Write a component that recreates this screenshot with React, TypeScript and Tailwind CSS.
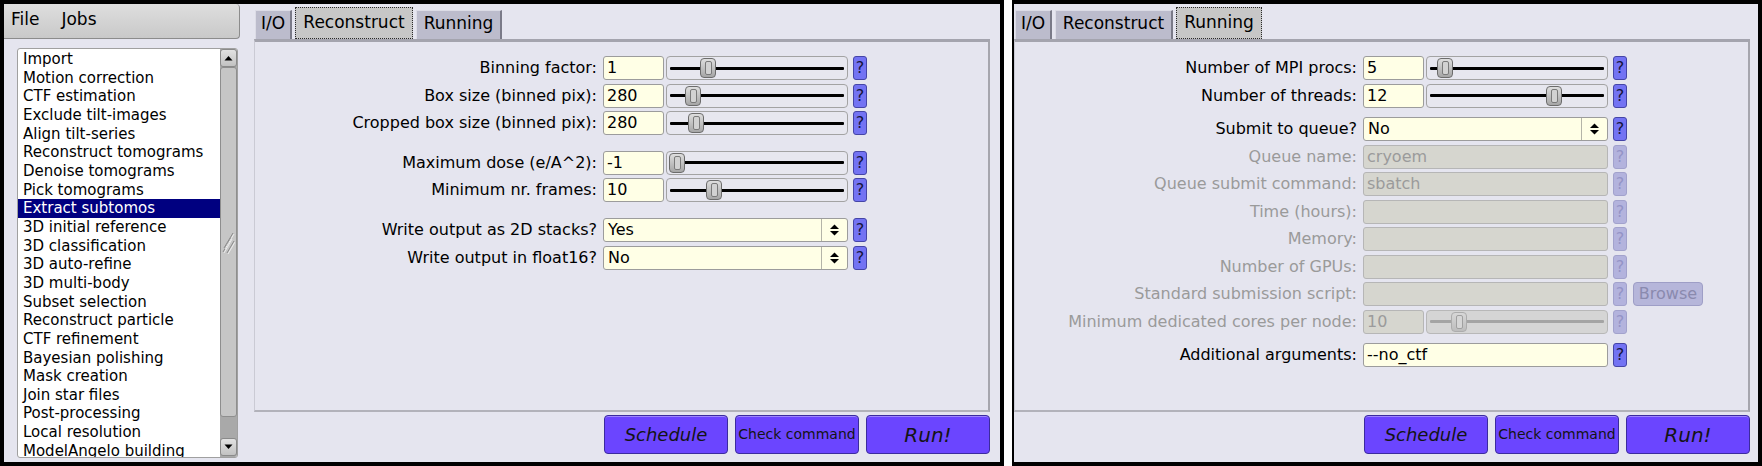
import React from "react";

const FONT = "font-['DejaVu_Sans',sans-serif]";

function Help({ disabled = false }: { disabled?: boolean }) {
  return (
    <div
      className={`w-[14px] h-[24px] shrink-0 rounded-[3px] border flex items-center justify-center text-[16px] leading-none ${
        disabled
          ? "bg-[#b3b3dd] border-[#a2a2cc] text-[#9393c6]"
          : "bg-[#7373f3] border-[#4545a6] text-[#14143a]"
      }`}
    >
      ?
    </div>
  );
}

function Input({
  value = "",
  w = "w-[61px]",
  disabled = false,
}: {
  value?: string;
  w?: string;
  disabled?: boolean;
}) {
  return (
    <div
      className={`${w} h-[24px] shrink-0 rounded-[3px] border flex items-center pl-[3px] text-[16px] ${
        disabled
          ? "bg-[#d6d6cf] border-[#b6b6b6] text-[#9b9b9b]"
          : "bg-[#ffffe6] border-[#9c9c9c] text-black"
      }`}
    >
      {value}
    </div>
  );
}

function Slider({ pos, disabled = false }: { pos: number; disabled?: boolean }) {
  return (
    <div
      className={`relative w-[182px] h-[24px] shrink-0 rounded-[4px] border ${
        disabled ? "bg-[#d5d5d5] border-[#b8b8b8]" : "bg-[#e7e7ef] border-[#a3a3a3]"
      }`}
    >
      <div
        className={`absolute left-[3px] right-[3px] top-[9.5px] h-[3px] rounded-[1px] ${
          disabled ? "bg-[#a4a4a4]" : "bg-black"
        }`}
      />
      <div
        className={`absolute top-[1px] w-[16px] h-[20px] rounded-[4px] border flex items-center justify-center ${
          disabled
            ? "border-[#acacac] bg-linear-to-b from-[#d8d8d8] to-[#bdbdbd]"
            : "border-[#6c6c6c] bg-linear-to-b from-[#dedede] to-[#a6a6a6]"
        }`}
        style={{ left: pos - 9 }}
      >
        <div
          className={`w-[7px] h-[14px] rounded-[2px] border ${
            disabled ? "border-[#a0a0a0] bg-[#d6d6d6]" : "border-[#7a7a7a] bg-[#d2d2d2]"
          }`}
        />
      </div>
    </div>
  );
}

function Choice({ value, w = "w-[245px]" }: { value: string; w?: string }) {
  return (
    <div
      className={`${w} h-[24px] shrink-0 rounded-[3px] border border-[#9c9c9c] bg-[#ffffe6] flex items-center text-[16px]`}
    >
      <div className="flex-1 pl-[4px]">{value}</div>
      <div className="w-[1px] h-[22px] bg-[#b4b4a8]" />
      <div className="w-[25px] h-full flex items-center justify-center">
        <svg width="11" height="14" viewBox="0 0 11 14">
          <polygon points="1,6 10,6 5.5,1.5" fill="#000" />
          <polygon points="1,8 10,8 5.5,12.5" fill="#000" />
        </svg>
      </div>
    </div>
  );
}

function Row({
  label,
  disabled = false,
  children,
}: {
  label: string;
  disabled?: boolean;
  children: React.ReactNode;
}) {
  return (
    <div className="flex h-[24px] items-center mb-[3.5px]">
      <div
        className={`w-[348px] shrink-0 pr-[6px] text-right text-[16px] whitespace-nowrap ${
          disabled ? "text-[#9a9a9a]" : "text-black"
        }`}
      >
        {label}
      </div>
      {children}
    </div>
  );
}

function Tabs({ active }: { active: number }) {
  const tabs: [string, string][] = [
    ["I/O", "w-[37px]"],
    ["Reconstruct", "w-[118px]"],
    ["Running", "w-[86px]"],
  ];
  return (
    <div className="h-[35px] flex items-end gap-[3px] pl-[1px]">
      {tabs.map(([t, w], i) =>
        i === active ? (
          <div
            key={t}
            className={`${w} h-[32px] bg-[#c7c7c7] border border-dotted border-[#2a2a2a] flex items-center justify-center text-[17px] text-black`}
          >
            {t}
          </div>
        ) : (
          <div
            key={t}
            className={`${w} h-[29px] bg-[#bcbccc] border-t border-l border-[#dcdce6] border-r-2 border-r-[#7a7a88] flex items-center justify-center pb-[3px] text-[17px] text-black`}
          >
            {t}
          </div>
        )
      )}
    </div>
  );
}

function RunButtons() {
  const base =
    "w-[124px] h-[39px] rounded-[4px] border border-[#3b2b9e] bg-[#6b45ff] shadow-[inset_0_1px_0_#9d86ff] flex items-center justify-center text-[#141414]";
  return (
    <div className="mt-[3px] h-[39px] flex justify-end gap-[7px]">
      <div className={`${base} text-[18px] italic`}>Schedule</div>
      <div className={`${base} text-[14px]`}>Check command</div>
      <div className={`${base} text-[20px] italic`}>Run!</div>
    </div>
  );
}

function Panel({ children }: { children: React.ReactNode }) {
  return (
    <div className="h-[373px] border-t-[3px] border-t-[#a4a4ae] border-l border-l-[#cacad4] border-r-2 border-r-[#a6a6ae] border-b-2 border-b-[#b2b2ba] pt-[14px]">
      {children}
    </div>
  );
}

const jobs = [
  "Import",
  "Motion correction",
  "CTF estimation",
  "Exclude tilt-images",
  "Align tilt-series",
  "Reconstruct tomograms",
  "Denoise tomograms",
  "Pick tomograms",
  "Extract subtomos",
  "3D initial reference",
  "3D classification",
  "3D auto-refine",
  "3D multi-body",
  "Subset selection",
  "Reconstruct particle",
  "CTF refinement",
  "Bayesian polishing",
  "Mask creation",
  "Join star files",
  "Post-processing",
  "Local resolution",
  "ModelAngelo building",
];

function JobList() {
  return (
    <div className="ml-[13px] mt-[9px] w-[221px] h-[410px] rounded-[3px] border border-[#a0a0a0] bg-white flex overflow-hidden">
      <div className="flex-1 pt-[1px] overflow-hidden">
        {jobs.map((j) => (
          <div
            key={j}
            className={`h-[18.67px] leading-[18.67px] pl-[5px] text-[15px] whitespace-nowrap ${
              j === "Extract subtomos" ? "bg-[#000080] text-white" : "text-black"
            }`}
          >
            {j}
          </div>
        ))}
      </div>
      <div className="w-[17px] flex flex-col bg-[#a9a9a9]">
        <div className="h-[18px] rounded-[3px] border border-[#8a8a8a] bg-linear-to-b from-[#e2e2e2] to-[#c2c2c2] flex items-center justify-center">
          <svg width="9" height="6" viewBox="0 0 9 6">
            <polygon points="0.5,5.5 8.5,5.5 4.5,1" fill="#000" />
          </svg>
        </div>
        <div className="h-[350px] rounded-[3px] border border-[#8e8e8e] bg-[#c6c6c6] flex items-center justify-center">
          <svg width="13" height="26" viewBox="0 0 13 26">
            <line x1="1" y1="23" x2="9" y2="9" stroke="#8a8a8a" strokeWidth="1" />
            <line x1="2" y1="24" x2="10" y2="10" stroke="#ececec" strokeWidth="1" />
            <line x1="2" y1="19" x2="11" y2="4" stroke="#8a8a8a" strokeWidth="1" />
            <line x1="3" y1="20" x2="12" y2="5" stroke="#ececec" strokeWidth="1" />
            <line x1="5" y1="24" x2="12" y2="12" stroke="#8a8a8a" strokeWidth="1" />
            <line x1="6" y1="25" x2="13" y2="13" stroke="#ececec" strokeWidth="1" />
          </svg>
        </div>
        <div className="flex-1" />
        <div className="h-[18px] mb-[1px] rounded-[3px] border border-[#8a8a8a] bg-linear-to-b from-[#e2e2e2] to-[#c2c2c2] flex items-center justify-center">
          <svg width="9" height="6" viewBox="0 0 9 6">
            <polygon points="0.5,0.5 8.5,0.5 4.5,5" fill="#000" />
          </svg>
        </div>
      </div>
    </div>
  );
}

function MenuBar() {
  return (
    <div className="w-[236px] h-[35px] rounded-r-[4px] border-r border-b border-[#8c8c8c] bg-linear-to-b from-[#dedede] to-[#c9c9c9] flex items-center text-[17px] text-black pb-[2px]">
      <span className="ml-[7px]">File</span>
      <span className="ml-[22px]">Jobs</span>
    </div>
  );
}

export default function App() {
  return (
    <div className={`w-[1762px] h-[466px] bg-white flex gap-[8px] overflow-hidden ${FONT}`}>
      {/* Left window */}
      <div className="w-[1004px] h-[466px] shrink-0 border-4 border-black bg-[#e5e5ef] flex">
        <div className="w-[250px] shrink-0 flex flex-col">
          <MenuBar />
          <JobList />
        </div>
        <div className="w-[736px] shrink-0 flex flex-col">
          <Tabs active={1} />
          <Panel>
            <Row label="Binning factor:">
              <Input value="1" />
              <div className="w-[2px]" />
              <Slider pos={42} />
              <div className="w-[5px]" />
              <Help />
            </Row>
            <Row label="Box size (binned pix):">
              <Input value="280" />
              <div className="w-[2px]" />
              <Slider pos={27} />
              <div className="w-[5px]" />
              <Help />
            </Row>
            <Row label="Cropped box size (binned pix):">
              <Input value="280" />
              <div className="w-[2px]" />
              <Slider pos={30} />
              <div className="w-[5px]" />
              <Help />
            </Row>
            <div className="h-[12px]" />
            <Row label="Maximum dose (e/A^2):">
              <Input value="-1" />
              <div className="w-[2px]" />
              <Slider pos={11} />
              <div className="w-[5px]" />
              <Help />
            </Row>
            <Row label="Minimum nr. frames:">
              <Input value="10" />
              <div className="w-[2px]" />
              <Slider pos={48} />
              <div className="w-[5px]" />
              <Help />
            </Row>
            <div className="h-[12.5px]" />
            <Row label="Write output as 2D stacks?">
              <Choice value="Yes" />
              <div className="w-[5px]" />
              <Help />
            </Row>
            <Row label="Write output in float16?">
              <Choice value="No" />
              <div className="w-[5px]" />
              <Help />
            </Row>
          </Panel>
          <RunButtons />
        </div>
      </div>

      {/* Right window */}
      <div className="w-[750px] h-[466px] shrink-0 border-black border-t-4 border-b-4 border-l-2 border-r-4 bg-[#e5e5ef] flex">
        <div className="w-[736px] shrink-0 flex flex-col">
          <Tabs active={2} />
          <Panel>
            <Row label="Number of MPI procs:">
              <Input value="5" />
              <div className="w-[2px]" />
              <Slider pos={19} />
              <div className="w-[5px]" />
              <Help />
            </Row>
            <Row label="Number of threads:">
              <Input value="12" />
              <div className="w-[2px]" />
              <Slider pos={128} />
              <div className="w-[5px]" />
              <Help />
            </Row>
            <div className="h-[6px]" />
            <Row label="Submit to queue?">
              <Choice value="No" />
              <div className="w-[5px]" />
              <Help />
            </Row>
            <Row label="Queue name:" disabled>
              <Input value="cryoem" w="w-[245px]" disabled />
              <div className="w-[5px]" />
              <Help disabled />
            </Row>
            <Row label="Queue submit command:" disabled>
              <Input value="sbatch" w="w-[245px]" disabled />
              <div className="w-[5px]" />
              <Help disabled />
            </Row>
            <Row label="Time (hours):" disabled>
              <Input w="w-[245px]" disabled />
              <div className="w-[5px]" />
              <Help disabled />
            </Row>
            <Row label="Memory:" disabled>
              <Input w="w-[245px]" disabled />
              <div className="w-[5px]" />
              <Help disabled />
            </Row>
            <Row label="Number of GPUs:" disabled>
              <Input w="w-[245px]" disabled />
              <div className="w-[5px]" />
              <Help disabled />
            </Row>
            <Row label="Standard submission script:" disabled>
              <Input w="w-[245px]" disabled />
              <div className="w-[5px]" />
              <Help disabled />
              <div className="ml-[6px] w-[70px] h-[24px] rounded-[4px] border border-[#9e9ec6] bg-[#b6b6da] flex items-center justify-center text-[16px] text-[#8a8aae]">
                Browse
              </div>
            </Row>
            <Row label="Minimum dedicated cores per node:" disabled>
              <Input value="10" disabled />
              <div className="w-[2px]" />
              <Slider pos={33} disabled />
              <div className="w-[5px]" />
              <Help disabled />
            </Row>
            <div className="h-[6px]" />
            <Row label="Additional arguments:">
              <Input value="--no_ctf" w="w-[245px]" />
              <div className="w-[5px]" />
              <Help />
            </Row>
          </Panel>
          <RunButtons />
        </div>
      </div>
    </div>
  );
}
